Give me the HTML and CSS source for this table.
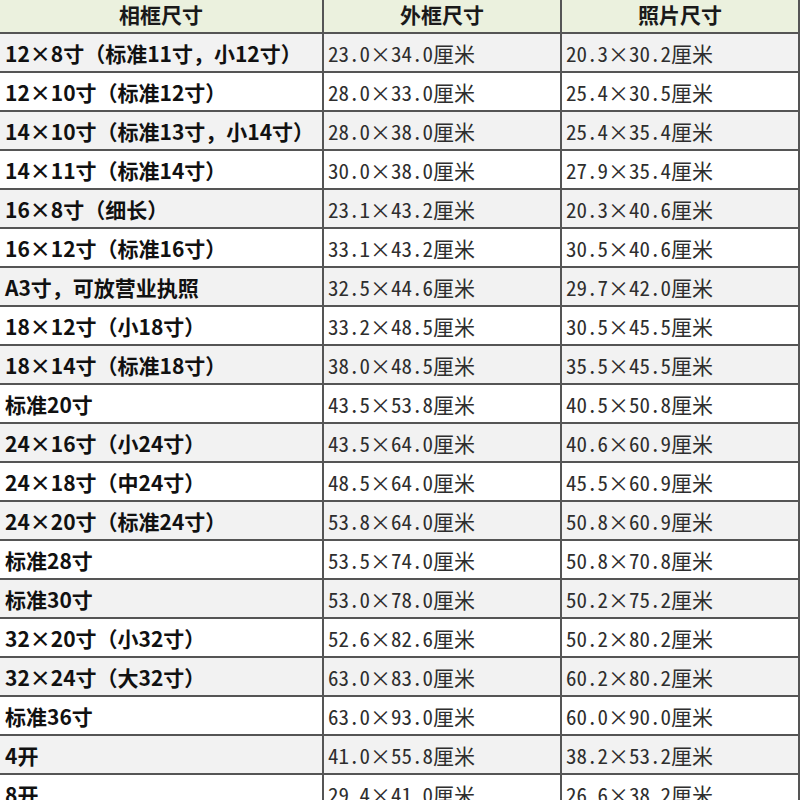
FILE: index.html
```html
<!DOCTYPE html>
<html lang="zh-CN">
<head>
<meta charset="utf-8">
<link rel="stylesheet" href="styles.css">
</head>
<body>
<table class="sizes">
  <colgroup><col class="c1"><col class="c2"><col class="c3"></colgroup>
  <thead>
    <tr><th>相框尺寸</th><th>外框尺寸</th><th>照片尺寸</th></tr>
  </thead>
  <tbody>
    <tr><td class="name">12×8寸（标准11寸，小12寸）</td><td>23.0×34.0厘米</td><td>20.3×30.2厘米</td></tr>
    <tr><td class="name">12×10寸（标准12寸）</td><td>28.0×33.0厘米</td><td>25.4×30.5厘米</td></tr>
    <tr><td class="name">14×10寸（标准13寸，小14寸）</td><td>28.0×38.0厘米</td><td>25.4×35.4厘米</td></tr>
    <tr><td class="name">14×11寸（标准14寸）</td><td>30.0×38.0厘米</td><td>27.9×35.4厘米</td></tr>
    <tr><td class="name">16×8寸（细长）</td><td>23.1×43.2厘米</td><td>20.3×40.6厘米</td></tr>
    <tr><td class="name">16×12寸（标准16寸）</td><td>33.1×43.2厘米</td><td>30.5×40.6厘米</td></tr>
    <tr><td class="name">A3寸，可放营业执照</td><td>32.5×44.6厘米</td><td>29.7×42.0厘米</td></tr>
    <tr><td class="name">18×12寸（小18寸）</td><td>33.2×48.5厘米</td><td>30.5×45.5厘米</td></tr>
    <tr><td class="name">18×14寸（标准18寸）</td><td>38.0×48.5厘米</td><td>35.5×45.5厘米</td></tr>
    <tr><td class="name">标准20寸</td><td>43.5×53.8厘米</td><td>40.5×50.8厘米</td></tr>
    <tr><td class="name">24×16寸（小24寸）</td><td>43.5×64.0厘米</td><td>40.6×60.9厘米</td></tr>
    <tr><td class="name">24×18寸（中24寸）</td><td>48.5×64.0厘米</td><td>45.5×60.9厘米</td></tr>
    <tr><td class="name">24×20寸（标准24寸）</td><td>53.8×64.0厘米</td><td>50.8×60.9厘米</td></tr>
    <tr><td class="name">标准28寸</td><td>53.5×74.0厘米</td><td>50.8×70.8厘米</td></tr>
    <tr><td class="name">标准30寸</td><td>53.0×78.0厘米</td><td>50.2×75.2厘米</td></tr>
    <tr><td class="name">32×20寸（小32寸）</td><td>52.6×82.6厘米</td><td>50.2×80.2厘米</td></tr>
    <tr><td class="name">32×24寸（大32寸）</td><td>63.0×83.0厘米</td><td>60.2×80.2厘米</td></tr>
    <tr><td class="name">标准36寸</td><td>63.0×93.0厘米</td><td>60.0×90.0厘米</td></tr>
    <tr><td class="name">4开</td><td>41.0×55.8厘米</td><td>38.2×53.2厘米</td></tr>
    <tr><td class="name">8开</td><td>29.4×41.0厘米</td><td>26.6×38.2厘米</td></tr>
  </tbody>
</table>
</body>
</html>
```
FILE: styles.css
```css
html, body {
  margin: 0;
  padding: 0;
  background: #ffffff;
  overflow: hidden;
}
body {
  width: 800px;
  height: 800px;
}
.sizes {
  border-collapse: collapse;
  table-layout: fixed;
  width: 800px;
  margin-top: -7px;
  margin-left: -2px;
  font-family: "Noto Sans CJK SC", "Noto Sans", sans-serif;
  font-size: 21px;
  color: #2e2e2e;
}
.sizes .c1 { width: 324px; }
.sizes .c2 { width: 238px; }
.sizes .c3 { width: 238px; }
.sizes th, .sizes td {
  border: 2px solid #555555;
  height: 37px;
  padding: 0 0 0 4px;
  line-height: 24px;
  white-space: nowrap;
  overflow: hidden;
  text-align: left;
  font-feature-settings: "hwid";
}
.sizes th {
  background: #ebf1de;
  font-weight: 700;
  text-align: center;
  color: #1a1a1a;
  padding: 0;
  font-feature-settings: normal;
}
.sizes tbody tr:nth-child(odd) td { background: #f2f2f2; }
.sizes tbody tr:nth-child(even) td { background: #ffffff; }
.sizes td.name {
  font-weight: 700;
  color: #111111;
  padding-left: 5px;
  font-feature-settings: normal;
}
```
